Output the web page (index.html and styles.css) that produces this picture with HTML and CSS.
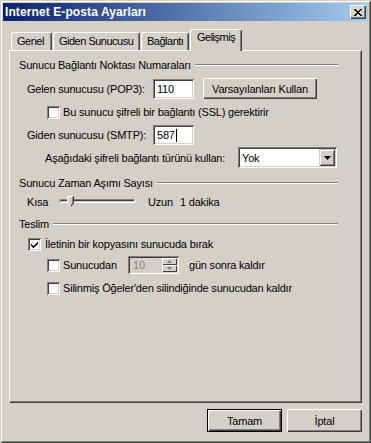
FILE: index.html
```html
<!DOCTYPE html>
<html lang="tr">
<head>
    <meta charset="UTF-8">
    <title>Internet E-posta Ayarları</title>
    <link rel="stylesheet" href="styles.css">
</head>
<body>
    <div class="window">
        <div class="titlebar">
            <span class="title">Internet E-posta Ayarları</span>
            <span class="close">
                <svg width="8" height="7" viewBox="0 0 8 7"><path d="M0 0h2v1h1v1h2v-1h1v-1h2v1h-1v1h-1v1h-1v1h1v1h1v1h1v1h-2v-1h-1v-1h-2v1h-1v1h-2v-1h1v-1h1v-1h1v-1h-1v-1h-1z" fill="#000"/></svg>
            </span>
        </div>

        <div class="tabs">
            <div class="tab tab-general">Genel</div>
            <div class="tab tab-outgoing">Giden Sunucusu</div>
            <div class="tab tab-connection">Bağlantı</div>
            <div class="tab tab-advanced active">Gelişmiş</div>
        </div>

        <div class="panel">
            <div class="group-head head-ports"><span>Sunucu Bağlantı Noktası Numaraları</span><i class="etch"></i></div>

            <div class="row row-pop">
                <span class="label-port">Gelen sunucusu (POP3):</span>
                <span class="field">110</span>
                <button class="btn btn-defaults">Varsayılanları Kullan</button>
            </div>

            <div class="row row-check row-ssl">
                <span class="check"></span>
                <span>Bu sunucu şifreli bir bağlantı (SSL) gerektirir</span>
            </div>

            <div class="row row-smtp">
                <span class="label-port">Giden sunucusu (SMTP):</span>
                <span class="field">587<i class="caret"></i></span>
            </div>

            <div class="row row-enc">
                <span class="label-enc">Aşağıdaki şifreli bağlantı türünü kullan:</span>
                <span class="select">
                    <span class="select-text">Yok</span>
                    <span class="drop">
                        <svg width="7" height="4" viewBox="0 0 7 4"><path d="M0 0h7l-3.5 4z" fill="#000"/></svg>
                    </span>
                </span>
            </div>

            <div class="group-head head-timeout"><span>Sunucu Zaman Aşımı Sayısı</span><i class="etch"></i></div>

            <div class="row row-slider">
                <span class="label-short">Kısa</span>
                <svg class="slider" width="79" height="14" viewBox="0 0 79 14">
                    <rect x="2" y="4" width="75" height="4" fill="#d4d0c8"/>
                    <path d="M2 7.5V4.5H77" stroke="#808080" fill="none"/>
                    <path d="M3 6.5V5.5H76" stroke="#404040" fill="none"/>
                    <path d="M2 7.5H77V4" stroke="#fff" fill="none"/>
                    <path d="M9.5 1.5h6v7l-3 3l-3-3z" fill="#d4d0c8"/>
                    <path d="M9.5 8.5v-7h6" stroke="#fff" fill="none"/>
                    <path d="M15.5 1v7.5l-3 3" stroke="#404040" fill="none"/>
                    <path d="M9.5 8.5l3 3" stroke="#fff" fill="none"/>
                    <path d="M14.5 2v6.5l-2 2" stroke="#808080" fill="none"/>
                </svg>
                <span class="label-long">Uzun</span>
                <span>1 dakika</span>
            </div>

            <div class="group-head head-delivery"><span>Teslim</span><i class="etch"></i></div>

            <div class="row row-keep">
                <span class="check">
                    <svg width="9" height="9" viewBox="0 0 9 9"><path d="M1 3.5l2.5 2.5l4.5-4.5v2.2l-4.5 4.5l-2.5-2.5z" fill="#000"/></svg>
                </span>
                <span>İletinin bir kopyasını sunucuda bırak</span>
            </div>

            <div class="row row-check row-days">
                <span class="check"></span>
                <span class="label-days">Sunucudan</span>
                <span class="spin">
                    <span class="spin-text">10</span>
                    <span class="spin-btns">
                        <span class="spin-btn"><svg width="5" height="3" viewBox="0 0 5 3"><path d="M2.5 0l2.5 3h-5z" fill="#808080"/></svg></span>
                        <span class="spin-btn"><svg width="5" height="3" viewBox="0 0 5 3"><path d="M0 0h5l-2.5 3z" fill="#808080"/></svg></span>
                    </span>
                </span>
                <span class="label-after">gün sonra kaldır</span>
            </div>

            <div class="row row-check row-deleted">
                <span class="check"></span>
                <span>Silinmiş Öğeler'den silindiğinde sunucudan kaldır</span>
            </div>
        </div>

        <div class="actions">
            <button class="btn btn-main default">Tamam</button>
            <button class="btn btn-main">İptal</button>
        </div>
    </div>
</body>
</html>
```

FILE: styles.css
```css
* {
    margin: 0;
    padding: 0;
    box-sizing: border-box;
}

body {
    background-color: #d4d0c8;
    color: #000;
    font-family: "Liberation Sans", Arial, sans-serif;
    font-size: 11px;
    letter-spacing: -0.2px;
}

.window {
    width: 371px;
    height: 443px;
    padding: 3px;
    background-color: #d4d0c8;
    box-shadow: inset 1px 1px #d4d0c8, inset -1px -1px #404040,
                inset 2px 2px #fff, inset -2px -2px #808080;
}

/* title bar */
.titlebar {
    height: 18px;
    display: flex;
    align-items: center;
    justify-content: space-between;
    padding: 0 2px 0 2px;
    background: linear-gradient(to right, #0a246a, #a6caf0);
}

.title {
    color: #fff;
    font-weight: bold;
    font-size: 12px;
    letter-spacing: 0.1px;
}

.close {
    width: 16px;
    height: 14px;
    display: flex;
    align-items: center;
    justify-content: center;
    background-color: #d4d0c8;
    box-shadow: inset 1px 1px #fff, inset -1px -1px #404040, inset -2px -2px #808080;
}

/* tabs */
.tabs {
    display: flex;
    align-items: flex-end;
    height: 21px;
    margin: 8px 0 0 8px;
}

.tab {
    height: 18px;
    padding: 2px 0 0 5px;
    margin-right: 1px;
    border-top: 1px solid #fff;
    border-left: 1px solid #fff;
    border-right: 1px solid #404040;
    border-radius: 3px 3px 0 0;
    box-shadow: inset -1px 0 #808080;
    white-space: nowrap;
    letter-spacing: -0.5px;
}

.tab-general { width: 41px; }
.tab-outgoing { width: 87px; }
.tab-connection { width: 48px; }
.tab-advanced { width: 52px; }

.tab.active {
    height: 22px;
    margin-bottom: -1px;
    padding: 1px 0 0 6px;
    position: relative;
    z-index: 1;
    background-color: #d4d0c8;
}

/* panel */
.panel {
    width: 353px;
    height: 353px;
    margin-left: 6px;
    border-top: 1px solid #fff;
    border-left: 1px solid #fff;
    border-right: 1px solid #404040;
    border-bottom: 1px solid #404040;
    box-shadow: inset -1px -1px #808080;
}

.group-head {
    display: flex;
    align-items: center;
    height: 14px;
    padding-left: 9px;
    margin-right: 23px;
}

.etch {
    flex: 1;
    height: 2px;
    margin-left: 4px;
    border-top: 1px solid #808080;
    border-bottom: 1px solid #fff;
}

.head-ports { margin-top: 7px; }
.head-timeout { margin-top: 8px; }
.head-delivery { margin-top: 6px; }

.row {
    display: flex;
    align-items: center;
    white-space: nowrap;
}

.row-pop {
    height: 21px;
    margin-top: 6px;
    padding-left: 17px;
}

.row-ssl {
    height: 14px;
    margin-top: 6px;
}

.row-smtp {
    height: 20px;
    margin-top: 6px;
    padding-left: 17px;
}

.row-enc {
    height: 21px;
    margin-top: 2px;
    padding-left: 35px;
}

.row-slider {
    height: 18px;
    margin-top: 3px;
    padding-left: 17px;
}

.row-keep {
    height: 14px;
    margin-top: 6px;
    padding-left: 18px;
}

.row-days {
    height: 18px;
    margin-top: 5px;
}

.row-deleted {
    height: 14px;
    margin-top: 7px;
}

.row-check {
    padding-left: 37px;
}

.label-port {
    width: 126px;
}

.label-enc {
    width: 193px;
}

.label-short {
    width: 31px;
}

.label-long {
    width: 32px;
    margin-left: 11px;
}

.label-days {
    width: 65px;
}

.label-after {
    margin-left: 10px;
}

/* sunken controls */
.field {
    display: flex;
    align-items: center;
    width: 41px;
    height: 20px;
    padding-left: 4px;
    background-color: #fff;
    box-shadow: inset 1px 1px #808080, inset -1px -1px #fff,
                inset 2px 2px #404040, inset -2px -2px #d4d0c8;
}

.caret {
    width: 1px;
    height: 13px;
    margin-left: 1px;
    background-color: #000;
}

.check {
    display: flex;
    align-items: center;
    justify-content: center;
    width: 13px;
    height: 13px;
    margin-right: 3px;
    background-color: #fff;
    box-shadow: inset 1px 1px #808080, inset -1px -1px #fff,
                inset 2px 2px #404040, inset -2px -2px #d4d0c8;
}

.row-keep .check {
    margin-right: 4px;
}

.select {
    display: flex;
    align-items: center;
    justify-content: space-between;
    width: 99px;
    height: 21px;
    padding: 2px;
    background-color: #fff;
    box-shadow: inset 1px 1px #808080, inset -1px -1px #fff,
                inset 2px 2px #404040, inset -2px -2px #d4d0c8;
}

.select-text {
    padding-left: 2px;
}

.drop {
    display: flex;
    align-items: center;
    justify-content: center;
    width: 16px;
    height: 17px;
    background-color: #d4d0c8;
    box-shadow: inset 1px 1px #d4d0c8, inset -1px -1px #404040,
                inset 2px 2px #fff, inset -2px -2px #808080;
}

.slider {
    display: block;
}

.spin {
    display: flex;
    align-items: center;
    justify-content: space-between;
    width: 51px;
    height: 18px;
    padding: 2px;
    background-color: #d4d0c8;
    box-shadow: inset 1px 1px #808080, inset -1px -1px #fff,
                inset 2px 2px #404040, inset -2px -2px #d4d0c8;
}

.spin-text {
    padding-left: 3px;
    color: #808080;
}

.spin-btns {
    display: flex;
    flex-direction: column;
    width: 15px;
    height: 14px;
}

.spin-btn {
    display: flex;
    align-items: center;
    justify-content: center;
    height: 7px;
    box-shadow: inset 1px 1px #fff, inset -1px -1px #404040;
}

/* buttons */
.btn {
    font: inherit;
    letter-spacing: inherit;
    color: #000;
    background-color: #d4d0c8;
    border: none;
    box-shadow: inset 1px 1px #fff, inset -1px -1px #404040, inset -2px -2px #808080;
}

.btn-defaults {
    width: 114px;
    height: 21px;
    margin-left: 9px;
}

.actions {
    display: flex;
    justify-content: flex-end;
    gap: 5px;
    width: 353px;
    margin: 6px 0 0 6px;
}

.btn-main {
    width: 75px;
    height: 23px;
}

.btn-main.default {
    box-shadow: inset 0 0 0 1px #000, inset 2px 2px #fff,
                inset -2px -2px #404040, inset -3px -3px #808080;
}
```
